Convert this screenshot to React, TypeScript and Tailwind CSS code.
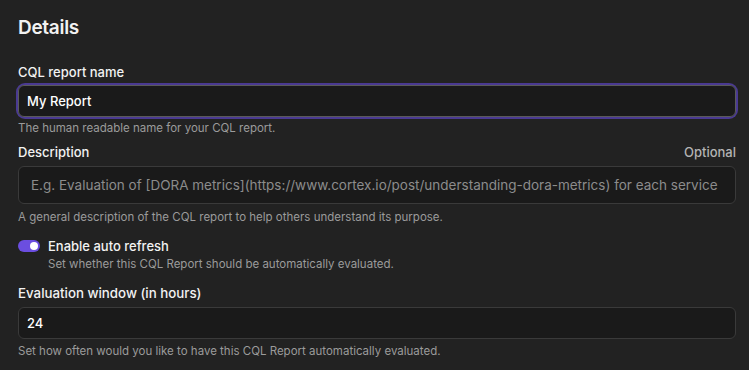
import { useState } from 'react';

export default function App() {
  const [name, setName] = useState('My Report');
  const [autoRefresh, setAutoRefresh] = useState(true);
  const [hours, setHours] = useState('24');

  return (
    <div
      className="min-h-screen w-full bg-[#222222] pl-[18px] pr-[13px] pt-[14px] text-[#f2f2f2]"
      style={{ fontFamily: 'Inter, "Noto Sans", sans-serif' }}
    >
      {/* Heading */}
      <h2 className="text-[19px] leading-[28px] font-semibold tracking-[-0.3px]">Details</h2>

      {/* CQL report name */}
      <div className="mt-[21px]">
        <label className="block text-[13px] leading-[18px] font-medium">CQL report name</label>
        <div className="mt-[4px] rounded-[7px] ring-2 ring-[#4a3a92]">
          <input
            value={name}
            onChange={(e) => setName(e.target.value)}
            className="block h-[32px] w-full rounded-[6px] border border-[#5a5a5a] bg-[#1a1a1a] px-[8px] text-[13px] font-medium text-white outline-none caret-white"
          />
        </div>
        <p className="mt-[3px] text-[11.5px] leading-[16px] text-[#9b9b9b]">
          The human readable name for your CQL report.
        </p>
      </div>

      {/* Description */}
      <div className="mt-[7px]">
        <div className="flex items-center justify-between">
          <label className="text-[13px] leading-[18px] font-medium">Description</label>
          <span className="text-[13px] leading-[18px] font-medium text-[#b4b4b4]">Optional</span>
        </div>
        <input
          placeholder="E.g. Evaluation of [DORA metrics](https://www.cortex.io/post/understanding-dora-metrics) for each service"
          className="mt-[5px] block h-[38px] w-full rounded-[6px] border border-[#3a3a3a] bg-[#1a1a1a] px-[12px] text-[13.5px] text-white placeholder:text-[#8c8c8c] outline-none"
        />
        <p className="mt-[5px] text-[11.5px] leading-[16px] text-[#9b9b9b]">
          A general description of the CQL report to help others understand its purpose.
        </p>
      </div>

      {/* Auto refresh */}
      <div className="mt-[12px] flex gap-[8px]">
        <button
          onClick={() => setAutoRefresh(!autoRefresh)}
          className={`mt-[3px] flex h-[12px] w-[22px] shrink-0 items-center rounded-full px-[2px] ${
            autoRefresh ? 'justify-end bg-[#6b4ee0]' : 'justify-start bg-[#555555]'
          }`}
        >
          <span className="h-[8px] w-[8px] rounded-full bg-white" />
        </button>
        <div>
          <div className="text-[13px] leading-[18px] font-medium">Enable auto refresh</div>
          <p className="mt-[1px] text-[11.5px] leading-[16px] text-[#9b9b9b]">
            Set whether this CQL Report should be automatically evaluated.
          </p>
        </div>
      </div>

      {/* Evaluation window */}
      <div className="mt-[12px]">
        <label className="block text-[13.3px] leading-[18px] font-medium">Evaluation window (in hours)</label>
        <input
          value={hours}
          onChange={(e) => setHours(e.target.value)}
          className="mt-[5px] block h-[32px] w-full rounded-[6px] border border-[#3a3a3a] bg-[#1a1a1a] px-[8px] text-[13px] font-medium text-white outline-none"
        />
        <p className="mt-[4px] text-[11.5px] leading-[16px] text-[#9b9b9b]">
          Set how often would you like to have this CQL Report automatically evaluated.
        </p>
      </div>
    </div>
  );
}
